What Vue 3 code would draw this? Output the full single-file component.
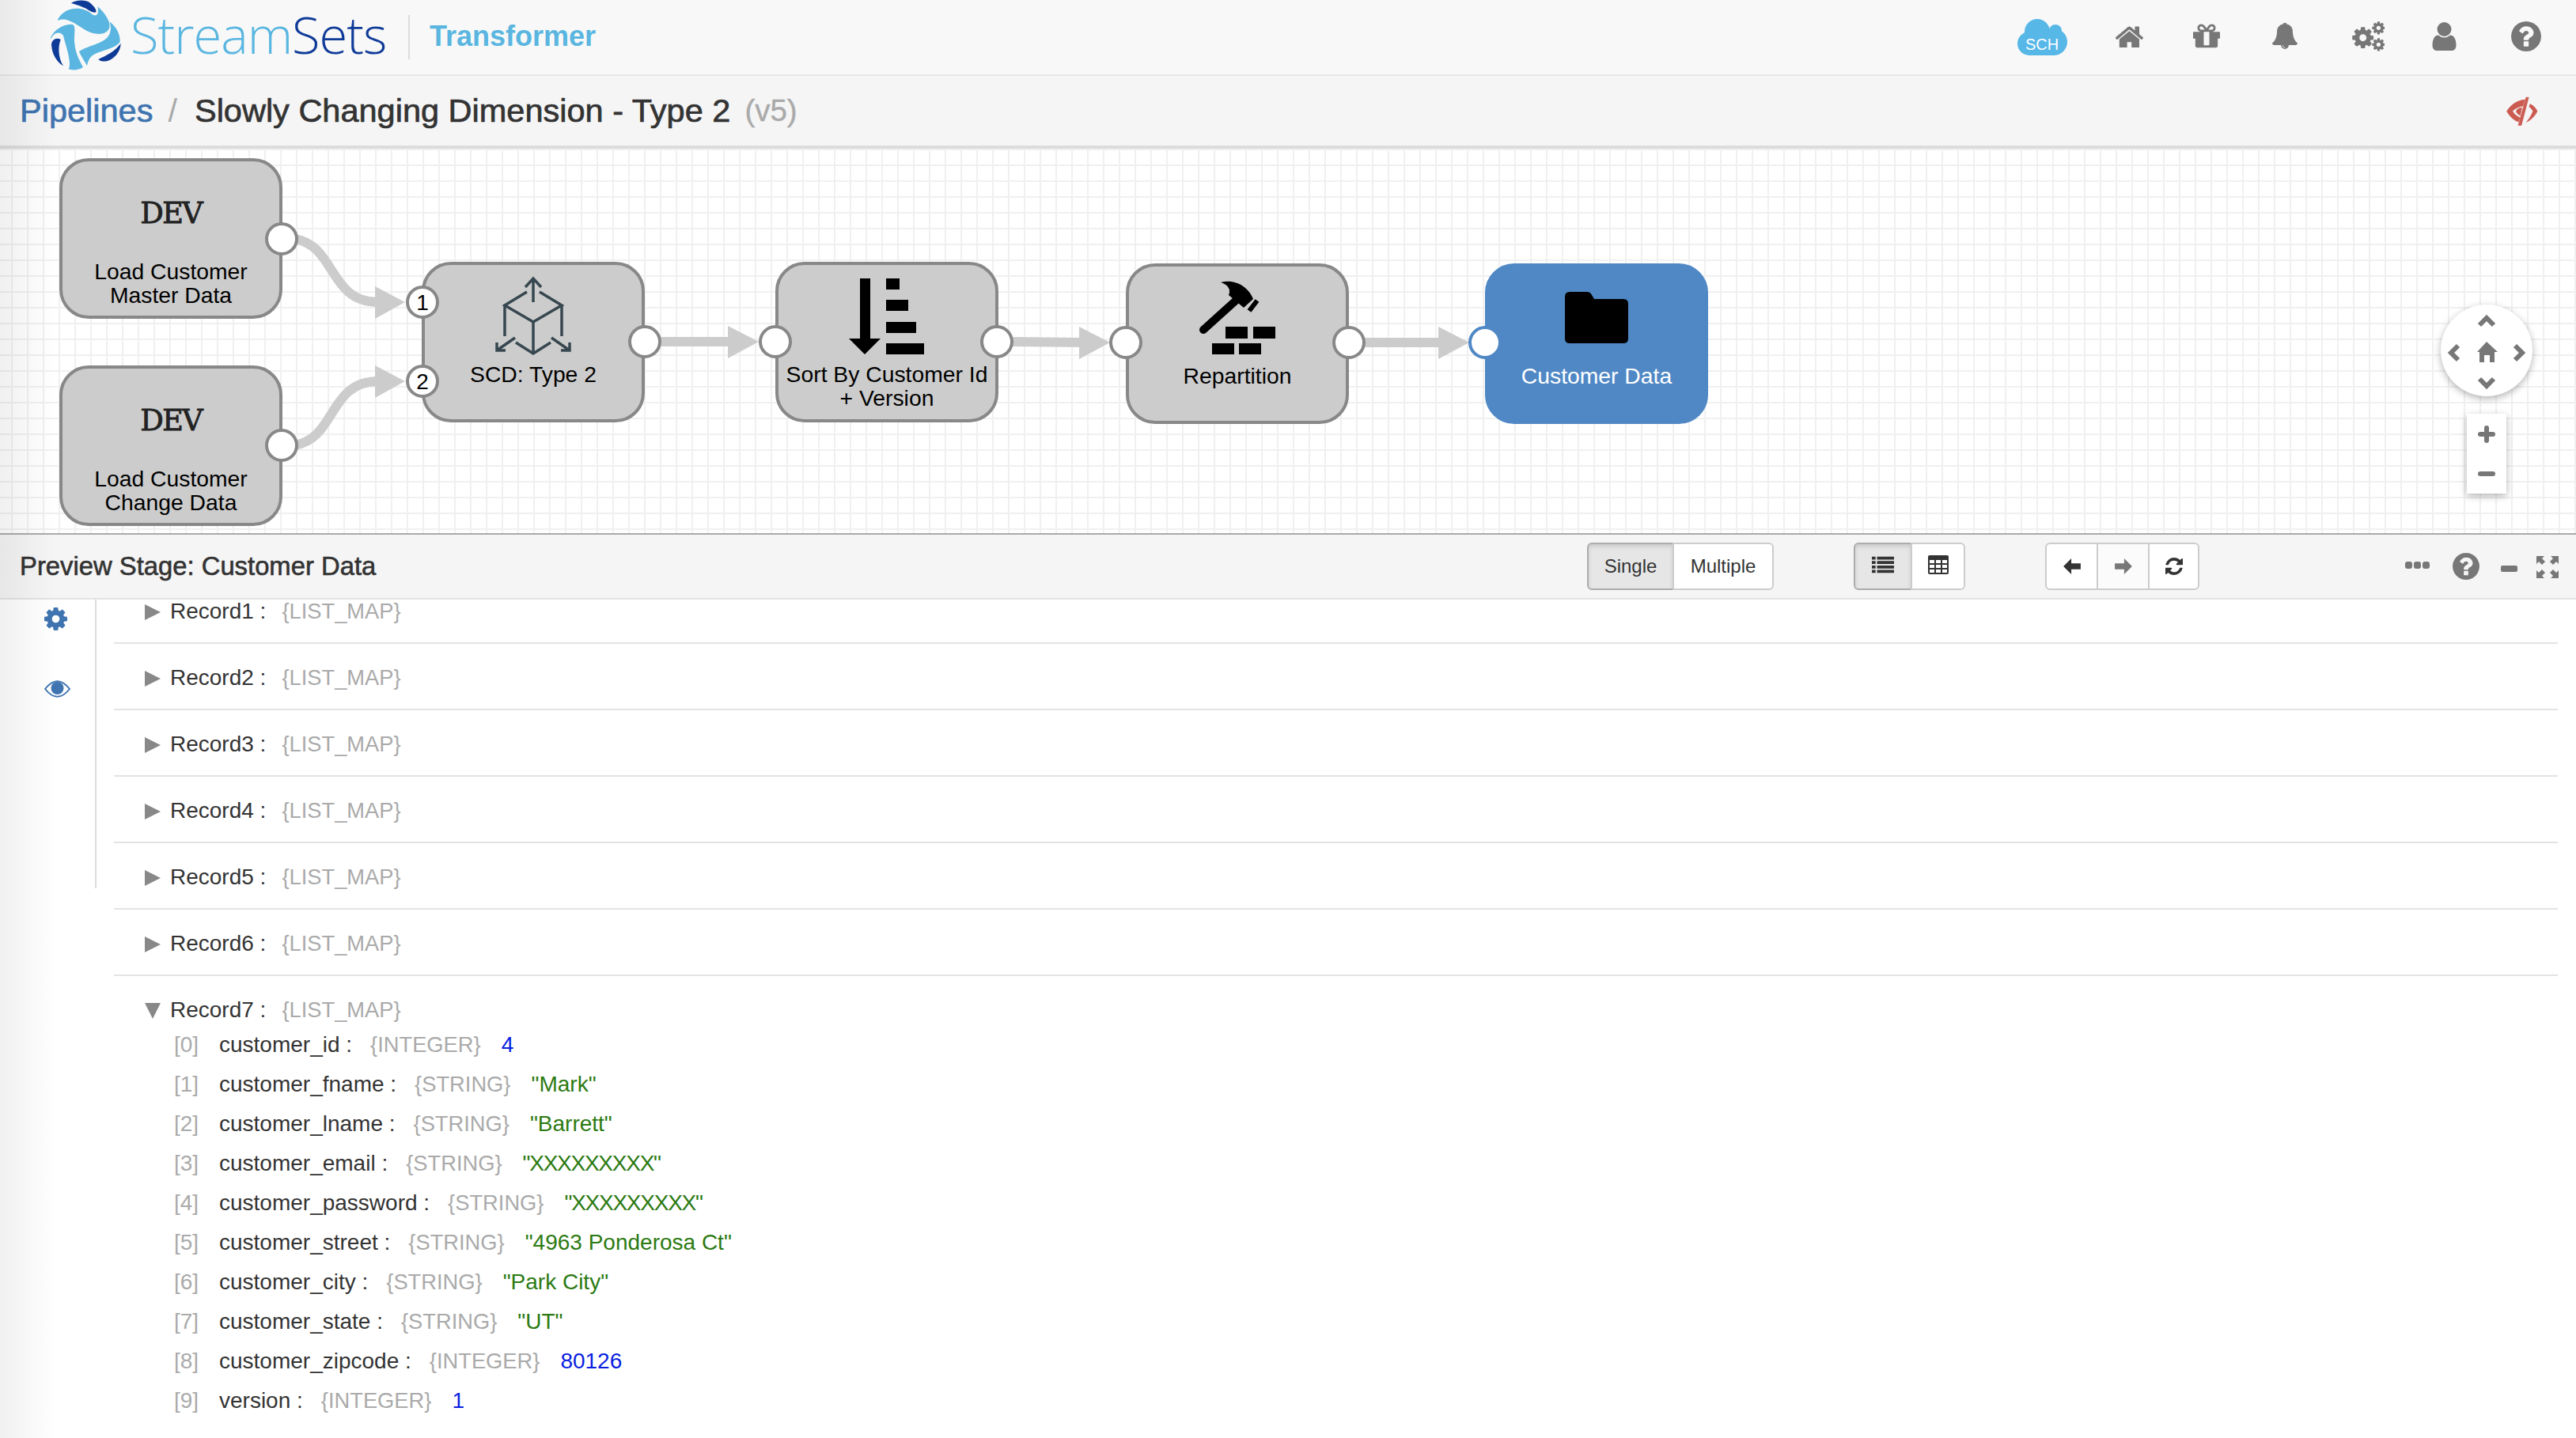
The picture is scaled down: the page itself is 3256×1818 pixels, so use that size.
<template>
  <div class="app">
    <header class="topbar">
      <svg class="swirl" viewBox="0 0 330 282">
        <path fill="#0f3b98" d="M105 12 C120 0 160 -3 178 12 C192 24 200 35 200 46 C185 52 170 35 150 28 C135 20 118 16 105 12Z" />
        <path fill="#5ab6e0" d="M55 72 C80 25 150 20 185 55 C200 65 212 55 205 25 C235 50 255 85 250 105 C240 135 195 135 160 115 C125 95 90 62 55 78Z" />
        <path fill="#5ab6e0" d="M28 140 C40 115 70 92 108 92 C126 96 114 130 118 165 C122 205 135 225 150 255 C135 266 110 268 95 262 C110 240 80 160 75 135 C60 115 35 125 28 150Z" />
        <path fill="#5ab6e0" d="M135 195 C175 170 235 165 250 130 C258 110 255 95 250 82 C275 100 292 130 290 160 C270 185 225 190 195 205 C180 212 170 225 165 250 C155 230 140 210 135 195Z" />
        <path fill="#0f3b98" d="M30 170 C30 150 50 140 65 150 C55 175 55 220 75 250 C50 235 32 205 30 170Z" />
        <path fill="#0f3b98" d="M208 225 C240 210 270 195 293 165 C292 200 265 225 240 232 C225 234 215 232 208 225Z" />
      </svg>
      <div class="brand"><span class="brand-light">Stream</span><span class="brand-dark">Sets</span></div>
      <div class="brand-divider"></div>
      <div class="product">Transformer</div>

      <div class="top-icons">
        <svg class="cloud" viewBox="0 0 63 46">
          <circle cx="25" cy="16" r="16" />
          <circle cx="48" cy="15" r="8" />
          <circle cx="46" cy="29" r="17" />
          <circle cx="15" cy="31" r="15" />
          <rect x="15" y="20" width="31" height="26" />
          <text x="31" y="39" text-anchor="middle">SCH</text>
        </svg>
        <svg class="ico home" viewBox="100 150 1600 1300"><path :d="paths.home" /></svg>
        <svg class="ico gift" viewBox="128 128 1536 1536"><path :d="paths.gift" /></svg>
        <svg class="ico bell" viewBox="64 128 1664 1664"><path :d="paths.bell" /></svg>
        <svg class="ico cogs" viewBox="0 0 42 38">
          <path :d="paths.cog" transform="translate(-1 5) scale(0.0175)" />
          <path :d="paths.cog" transform="translate(25 -1) scale(0.0105)" />
          <path :d="paths.cog" transform="translate(25 20) scale(0.0105)" />
        </svg>
        <svg class="ico user" viewBox="256 128 1280 1536"><path :d="paths.user" /></svg>
        <svg class="ico help" viewBox="128 128 1536 1536"><path :d="paths.help" /></svg>
      </div>
    </header>

    <div class="crumbs">
      <a class="crumb-link">Pipelines</a>
      <span class="crumb-sep">/</span>
      <span class="crumb-title">Slowly Changing Dimension - Type 2</span>
      <span class="crumb-version">(v5)</span>
      <svg class="eye-off" viewBox="40 25 150 130">
        <path d="M133 32 H144 L113 150 H100Z" />
        <path d="M128 42 C95 45 70 62 52 90 C65 115 85 130 100 135 L108 118 C95 112 82 103 76 90 C84 80 100 72 120 68Z" />
        <path d="M92 88 C98 78 108 76 115 76 L108 108 C100 104 90 96 92 88Z" />
        <path d="M150 60 C165 66 175 80 180 90 C172 110 152 128 135 136 C150 118 158 102 162 90 C158 82 152 76 146 72Z" />
      </svg>
    </div>

    <div class="graph">
      <svg class="canvas" viewBox="0 188 3256 486">
        <g class="edges">
          <path v-for="(e, i) in edges" :key="i" :d="e" />
        </g>
        <polygon v-for="(a, i) in arrows" :key="i" class="arrow" :points="a" />

        <g v-for="n in nodes" :key="n.label[0]">
          <rect
            :class="n.active ? 'node node-active' : 'node'"
            :x="n.x + 2" :y="n.y + 2" width="278" height="199" rx="35"
          />
          <text
            v-for="(line, i) in n.label" :key="line"
            :class="n.active ? 'node-label node-label-active' : 'node-label'"
            :x="n.x + 141" :y="n.labelY + i * 30"
          >{{ line }}</text>
          <text v-if="n.dev" class="dev" :x="n.x + 141" :y="n.y + 82">DEV</text>
        </g>

        <!-- stage icons -->
        <g class="scd">
          <path d="M674 382V354M664 363l10-11 10 11" />
          <path d="M666 369L638 386L674 407L710 386L682 369" />
          <path d="M638 386V425M710 386V425M674 407V447" />
          <path d="M652 433L674 447L696 433" />
          <path d="M651 427L628 443M628 433V443H639M697 427L720 443M720 433V443H709" />
        </g>
        <g class="black">
          <rect x="1087" y="352" width="13" height="78" />
          <polygon points="1073,428 1113,428 1093,448" />
          <rect x="1120" y="352" width="17" height="14" />
          <rect x="1120" y="379" width="28" height="14" />
          <rect x="1120" y="407" width="38" height="14" />
          <rect x="1120" y="434" width="48" height="14" />
        </g>
        <g class="black">
          <line x1="1521" y1="417" x2="1562" y2="380" class="handle" />
          <path d="M1543 357 C1560 352 1578 362 1584 378 L1572 389 L1553 373 C1557 365 1550 359 1543 357Z" />
          <line x1="1589" y1="380" x2="1579" y2="393" class="face" />
          <rect x="1549" y="413" width="28" height="15" />
          <rect x="1584" y="413" width="28" height="15" />
          <rect x="1532" y="434" width="28" height="14" />
          <rect x="1566" y="434" width="28" height="14" />
        </g>
        <path class="black" d="M1984 369H2006Q2010 369 2012 373L2015 378H2052Q2058 378 2058 384V428Q2058 434 2052 434H1984Q1978 434 1978 428V375Q1978 369 1984 369Z" />

        <g v-for="(p, i) in ports" :key="i">
          <circle :class="p.active ? 'port port-active' : 'port'" :cx="p.x" :cy="p.y" r="19" />
          <text v-if="p.num" class="port-num" :x="p.x" :y="p.y + 10">{{ p.num }}</text>
        </g>

        <!-- pan and zoom -->
        <circle class="pan" cx="3143" cy="443" r="58" />
        <g class="pan-arrows">
          <path d="M3134 411L3143 402L3152 411" />
          <path d="M3134 479L3143 488L3152 479" />
          <path d="M3107 437L3098 446L3107 455" />
          <path d="M3179 437L3188 446L3179 455" />
        </g>
        <path class="pan-home" fill-rule="evenodd" d="M3143 432L3157 445H3153V458H3147V449H3140V458H3134V445H3131Z" />
        <rect class="pan" x="3118" y="523" width="50" height="101" />
        <path class="zoom-sign" d="M3135 549H3151M3143 541V557M3135 599H3151" />
      </svg>
    </div>

    <div class="preview-bar">
      <div class="preview-title">Preview Stage: Customer Data</div>
      <div class="btn-group">
        <button class="btn btn-single active">Single</button>
        <button class="btn btn-multiple">Multiple</button>
      </div>
      <div class="btn-group group-gap">
        <button class="btn btn-list active">
          <svg class="btn-ico" viewBox="0 0 30 24">
            <path d="M0 1h5v4H0zM7 1h23v4H7zM0 7h5v4H0zM7 7h23v4H7zM0 13h5v4H0zM7 13h23v4H7zM0 19h5v4H0zM7 19h23v4H7z" />
          </svg>
        </button>
        <button class="btn btn-table">
          <svg class="btn-ico" viewBox="0 0 26 24">
            <path fill-rule="evenodd" d="M2 0H24Q26 0 26 2V22Q26 24 24 24H2Q0 24 0 22V2Q0 0 2 0ZM2 6V10H8V6ZM10 6V10H16V6ZM18 6V10H24V6ZM2 12V16H8V12ZM10 12V16H16V12ZM18 12V16H24V12ZM2 18V22H8V18ZM10 18V22H16V18ZM18 18V22H24V18Z" />
          </svg>
        </button>
      </div>
      <div class="btn-group group-gap">
        <button class="btn btn-nav">
          <svg class="btn-arrow" viewBox="0 0 24 22"><path d="M0 11L11 0V7H24V15H11V22Z" /></svg>
        </button>
        <button class="btn btn-nav faded">
          <svg class="btn-arrow" viewBox="0 0 24 22"><path d="M24 11L13 0V7H0V15H13V22Z" /></svg>
        </button>
        <button class="btn btn-nav btn-refresh">
          <svg class="btn-refresh-ico" viewBox="128 128 1536 1536"><path :d="paths.refresh" /></svg>
        </button>
      </div>
      <div class="bar-tools">
        <svg class="tool-dots" viewBox="0 0 31 9">
          <rect x="0" y="0" width="9" height="9" rx="3" />
          <rect x="11" y="0" width="9" height="9" rx="3" />
          <rect x="22" y="0" width="9" height="9" rx="3" />
        </svg>
        <svg class="tool-help" viewBox="128 128 1536 1536"><path :d="paths.help" /></svg>
        <svg class="tool-minus" viewBox="0 0 21 8"><rect width="21" height="8" rx="2" /></svg>
        <svg class="tool-expand" viewBox="0 0 28 28">
          <path d="M0 0H10L7 3L11 7L7 11L3 7L0 10ZM28 0V10L25 7L21 11L17 7L21 3L18 0ZM0 28V18L3 21L7 17L11 21L7 25L10 28ZM28 28H18L21 25L17 21L21 17L25 21L28 18Z" />
        </svg>
      </div>
    </div>

    <div class="preview-body">
      <aside class="side">
        <svg class="side-gear" viewBox="128 128 1536 1536"><path :d="paths.cog" /></svg>
        <svg class="side-eye" viewBox="0 0 33 22">
          <path class="eye-line" d="M1 11C7 3.500 12 1.200 16.500 1.200S26 3.500 32 11C26 18.500 21 20.800 16.500 20.800S7 18.500 1 11Z" />
          <circle class="eye-ball" cx="16.500" cy="10" r="8" />
        </svg>
      </aside>
      <div class="records">
        <div v-for="r in records" :key="r" class="record">
          <div class="rec-line">
            <span class="tri-right"></span>
            <span class="key">{{ r }} :</span>
            <span class="type">{LIST_MAP}</span>
          </div>
        </div>
        <div class="record-open">
          <div class="rec-line rec-line-open">
            <span class="tri-down"></span>
            <span class="key">Record7 :</span>
            <span class="type">{LIST_MAP}</span>
          </div>
          <div v-for="(f, i) in fields" :key="f.name" class="field">
            <span class="idx">[{{ i }}]</span>
            <span class="key">{{ f.name }} :</span>
            <span class="type">{{ f.type }}</span>
            <span :class="valueClass(f)">{{ f.value }}</span>
          </div>
        </div>
      </div>
    </div>

    <div class="edge-shade"></div>
  </div>
</template>

<script setup>
const paths = {
  home: 'M1472 992v480q0 26-19 45t-45 19h-384v-384h-256v384h-384q-26 0-45-19t-19-45v-480q0-1 .5-3t.5-3l575-474 575 474q1 2 1 6zm223-69l-62 74q-8 9-21 11h-3q-13 0-21-7l-692-577-692 577q-12 8-24 7-13-2-21-11l-62-74q-8-10-7-23.5t11-21.5l719-599q32-26 76-26t76 26l244 204v-195q0-14 9-23t23-9h192q14 0 23 9t9 23v408l219 182q10 8 11 21.5t-7 23.5z',
  gift: 'M1056 1356v-716h-320v716q0 25 18 38.500t46 13.500h192q28 0 46-13.500t18-38.500zm-456-844h195l-126-161q-26-31-69-31-40 0-68 28t-28 68 28 68 68 28zm688-96q0-40-28-68t-68-28q-43 0-69 31l-125 161h194q40 0 68-28t28-68zm376 256v320q0 14-9 23t-23 9h-96v416q0 40-28 68t-68 28h-1088q-40 0-68-28t-28-68v-416h-96q-14 0-23-9t-9-23v-320q0-14 9-23t23-9h440q-93 0-158.500-65.500t-65.500-158.500 65.500-158.500 158.500-65.500q107 0 168 77l128 165 128-165q61-77 168-77 93 0 158.500 65.500t65.500 158.500-65.500 158.500-158.500 65.500h440q14 0 23 9t9 23z',
  bell: 'M912 1696q0-16-16-16-59 0-101.500-42.500t-42.500-101.500q0-16-16-16t-16 16q0 73 51.500 124.500t124.500 51.500q16 0 16-16zm816-288q0 52-38 90t-90 38h-448q0 106-75 181t-181 75-181-75-75-181h-448q-52 0-90-38t-38-90q50-42 91-88t85-119.500 74.500-158.500 50-206 19.500-260q0-152 117-282.500t307-158.500q-8-19-8-39 0-40 28-68t68-28 68 28 28 68q0 20-8 39 190 28 307 158.500t117 282.500q0 139 19.500 260t50 206 74.500 158.500 85 119.500 91 88z',
  cog: 'M1152 896q0-106-75-181t-181-75-181 75-75 181 75 181 181 75 181-75 75-181zm512-109v222q0 12-8 23t-20 13l-185 28q-19 54-39 91 35 50 107 138 10 12 10 25t-9 23q-27 37-99 108t-94 71q-12 0-26-9l-138-108q-44 23-91 38-16 136-29 186-7 28-36 28h-222q-14 0-24.500-8.500t-11.500-21.500l-28-184q-49-16-90-37l-141 107q-10 9-25 9-14 0-25-11-126-114-165-168-7-10-7-23 0-12 8-23 15-21 51-66.500t54-70.500q-27-50-41-99l-183-27q-13-2-21-12.500t-8-23.500v-222q0-12 8-23t19-13l186-28q14-46 39-92-40-57-107-138-10-12-10-24 0-10 9-23 26-36 98.500-107.500t94.500-71.500q13 0 26 10l138 107q44-23 91-38 16-136 29-186 7-28 36-28h222q14 0 24.500 8.500t11.500 21.500l28 184q49 16 90 37l142-107q9-9 24-9 13 0 25 10 129 119 165 170 7 8 7 22 0 12-8 23-15 21-51 66.500t-54 70.500q26 50 41 98l183 28q13 2 21 12.500t8 23.500z',
  user: 'M1536 1399q0 109-62.500 187t-150.500 78h-854q-88 0-150.500-78t-62.500-187q0-85 8.500-160.500t31.500-152 58.500-131 94-89 134.500-34.500q131 128 313 128t313-128q76 0 134.500 34.500t94 89 58.500 131 31.500 152 8.500 160.500zm-256-887q0 159-112.500 271.500t-271.500 112.500-271.500-112.500-112.500-271.500 112.500-271.500 271.500-112.500 271.500 112.500 112.500 271.500z',
  help: 'M1024 1376v-192q0-14-9-23t-23-9h-192q-14 0-23 9t-9 23v192q0 14 9 23t23 9h192q14 0 23-9t9-23zm256-672q0-88-55.500-163t-138.500-116-170-41q-243 0-371 213-15 24 8 42l132 100q7 6 19 6 16 0 25-12 53-68 86-92 34-24 86-24 48 0 85.500 26t37.500 59q0 38-20 61t-68 45q-63 28-115.500 86.500t-52.500 125.500v36q0 14 9 23t23 9h192q14 0 23-9t9-23q0-19 21.500-49.500t54.500-49.500q32-18 49-28.500t46-35 44.500-48 28-60.500 12.500-81zm384 192q0 209-103 385.500t-279.500 279.500-385.500 103-385.500-103-279.500-279.500-103-385.500 103-385.500 279.500-279.500 385.500-103 385.500 103 279.500 279.500 103 385.500z',
  refresh: 'M1639 1056q0 5-1 7-64 268-268 434.500t-478 166.500q-146 0-282.500-55t-243.500-157l-129 129q-19 19-45 19t-45-19-19-45v-448q0-26 19-45t45-19h448q26 0 45 19t19 45-19 45l-137 137q71 66 161 102t187 36q134 0 250-65t186-179q11-17 53-117 8-23 30-23h192q13 0 22.500 9.500t9.500 22.500zm25-800v448q0 26-19 45t-45 19h-448q-26 0-45-19t-19-45 19-45l138-138q-148-137-349-137-134 0-250 65t-186 179q-11 17-53 117-8 23-30 23h-199q-13 0-22.500-9.500t-9.500-22.500v-7q65-268 270-434.500t480-166.500q146 0 284 55.500t245 156.500l130-129q19-19 45-19t45 19 19 45z',
}

const nodes = [
  { x: 75, y: 200, label: ['Load Customer', 'Master Data'], labelY: 353, dev: true },
  { x: 75, y: 462, label: ['Load Customer', 'Change Data'], labelY: 615, dev: true },
  { x: 533, y: 331, label: ['SCD: Type 2'], labelY: 483 },
  { x: 980, y: 331, label: ['Sort By Customer Id', '+ Version'], labelY: 483 },
  { x: 1423, y: 333, label: ['Repartition'], labelY: 485 },
  { x: 1877, y: 333, label: ['Customer Data'], labelY: 485, active: true },
]

const ports = [
  { x: 356, y: 302 },
  { x: 356, y: 563 },
  { x: 534, y: 382, num: 1 },
  { x: 534, y: 482, num: 2 },
  { x: 815, y: 432 },
  { x: 980, y: 432 },
  { x: 1260, y: 432 },
  { x: 1423, y: 433 },
  { x: 1705, y: 433 },
  { x: 1877, y: 433, active: true },
]

const edges = [
  'M372 302C425 310 415 382 478 382',
  'M372 563C425 555 415 482 478 482',
  'M832 432H925',
  'M1278 432L1370 433',
  'M1722 433H1825',
]

const arrows = [
  '474,362 512,382 474,403',
  '474,462 512,482 474,503',
  '920,412 959,432 920,453',
  '1364,413 1403,433 1364,454',
  '1818,413 1857,433 1818,454',
]

const records = ['Record1', 'Record2', 'Record3', 'Record4', 'Record5', 'Record6']

const fields = [
  { name: 'customer_id', type: '{INTEGER}', value: '4' },
  { name: 'customer_fname', type: '{STRING}', value: '"Mark"' },
  { name: 'customer_lname', type: '{STRING}', value: '"Barrett"' },
  { name: 'customer_email', type: '{STRING}', value: '"XXXXXXXXX"', masked: true },
  { name: 'customer_password', type: '{STRING}', value: '"XXXXXXXXX"', masked: true },
  { name: 'customer_street', type: '{STRING}', value: '"4963 Ponderosa Ct"' },
  { name: 'customer_city', type: '{STRING}', value: '"Park City"' },
  { name: 'customer_state', type: '{STRING}', value: '"UT"' },
  { name: 'customer_zipcode', type: '{INTEGER}', value: '80126' },
  { name: 'version', type: '{INTEGER}', value: '1' },
]

function valueClass(f) {
  if (f.type === '{INTEGER}') return 'val val-num'
  return f.masked ? 'val val-str val-masked' : 'val val-str'
}
</script>

<style>
body {
  margin: 0;
  background: #fff;
}
</style>

<style scoped>
.app {
  position: relative;
  width: 3256px;
  height: 1818px;
  overflow: hidden;
  background: #fff;
  color: #333;
  font-family: "Liberation Sans", Arial, sans-serif;
}

.edge-shade {
  position: absolute;
  left: 0;
  top: 0;
  width: 70px;
  height: 100%;
  background: linear-gradient(to right, rgba(0, 0, 0, 0.06), rgba(0, 0, 0, 0));
  pointer-events: none;
}

/* top bar */
.topbar {
  display: flex;
  align-items: center;
  box-sizing: border-box;
  height: 96px;
  padding-left: 55px;
  padding-right: 44px;
  background: #f8f8f8;
  border-bottom: 2px solid #e7e7e7;
}

.swirl {
  width: 110px;
  height: 94px;
  flex: none;
}

.brand {
  width: 351px;
  margin-top: -8px;
  font-family: "Open Sans", sans-serif;
  font-weight: 300;
  font-size: 65px;
  letter-spacing: -1px;
  white-space: nowrap;
}

.brand-light {
  color: #5ab6e0;
}

.brand-dark {
  color: #0f3b98;
}

.brand-divider {
  width: 2px;
  height: 56px;
  background: #ddd;
}

.product {
  margin-left: 25px;
  margin-top: -2px;
  font-size: 36px;
  font-weight: 700;
  color: #5ab6e0;
}

.top-icons {
  display: flex;
  align-items: center;
  margin-left: auto;
  margin-top: -3px;
}

.cloud {
  width: 63px;
  height: 46px;
  margin-top: 2px;
  fill: #57b7e7;
}

.cloud text {
  fill: #fff;
  font-size: 20px;
}

.ico {
  fill: #777;
  flex: none;
}

.home {
  width: 35px;
  height: 29px;
  margin-left: 61px;
}

.gift {
  width: 34px;
  height: 34px;
  margin-left: 63px;
}

.bell {
  width: 32px;
  height: 34px;
  margin-left: 66px;
}

.cogs {
  width: 42px;
  height: 38px;
  margin-left: 68px;
}

.user {
  width: 31px;
  height: 36px;
  margin-left: 60px;
}

.help {
  width: 38px;
  height: 38px;
  margin-left: 69px;
}

/* breadcrumb */
.crumbs {
  display: flex;
  align-items: center;
  box-sizing: border-box;
  height: 92px;
  padding: 0 46px 0 25px;
  font-size: 41.500px;
  background: #f5f5f5;
  border-bottom: 4px solid #dcdcdc;
}

.crumb-link {
  color: #3f74b0;
  -webkit-text-stroke: 0.7px #3f74b0;
}

.crumb-sep {
  margin: 0 22px 0 19px;
  color: #aaa;
}

.crumb-title {
  color: #333;
  -webkit-text-stroke: 0.7px #333;
}

.crumb-version {
  margin-left: 18px;
  color: #aaa;
  font-size: 38.500px;
  -webkit-text-stroke: 0.4px #aaa;
}

.eye-off {
  width: 45px;
  height: 39px;
  margin-left: auto;
  fill: #cb5a50;
  stroke: #cb5a50;
  stroke-width: 2;
}

/* pipeline canvas */
.graph {
  box-sizing: border-box;
  height: 488px;
  border-bottom: 2px solid #aaa;
  background-color: #fff;
  background-image:
    linear-gradient(to right, #f0f0f0 2px, transparent 2px),
    linear-gradient(to bottom, #f0f0f0 2px, transparent 2px);
  background-size: 20px 20px;
  background-position: 14px 0;
}

.canvas {
  display: block;
  width: 3256px;
  height: 486px;
}

.edges path {
  fill: none;
  stroke: #ccc;
  stroke-width: 12;
}

.arrow {
  fill: #ccc;
}

.node {
  fill: #ccc;
  stroke: #888;
  stroke-width: 4;
}

.node-active {
  fill: #5088c5;
  stroke: #5088c5;
}

.node-label {
  font-size: 28.300px;
  text-anchor: middle;
  fill: #000;
}

.node-label-active {
  fill: #fff;
}

.dev {
  font-family: "DejaVu Serif", serif;
  font-size: 37px;
  letter-spacing: -2px;
  text-anchor: middle;
  fill: #222;
  stroke: #222;
  stroke-width: 0.8;
}

.port {
  fill: #fff;
  stroke: #888;
  stroke-width: 4;
}

.port-active {
  stroke: #5088c5;
}

.port-num {
  font-size: 28px;
  text-anchor: middle;
  fill: #000;
}

.scd path {
  fill: none;
  stroke: #37474f;
  stroke-width: 3.500;
}

.black {
  fill: #000;
}

.handle {
  stroke: #000;
  stroke-width: 10;
  stroke-linecap: round;
}

.face {
  stroke: #000;
  stroke-width: 6;
}

.pan {
  fill: #fff;
  filter: drop-shadow(0 3px 5px rgba(0, 0, 0, 0.3));
}

.pan-arrows path {
  fill: none;
  stroke: #777;
  stroke-width: 6;
}

.pan-home {
  fill: #777;
}

.zoom-sign {
  fill: none;
  stroke: #777;
  stroke-width: 6;
  stroke-linecap: round;
}

/* preview toolbar */
.preview-bar {
  display: flex;
  align-items: center;
  box-sizing: border-box;
  height: 82px;
  padding: 0 22px 0 25px;
  background: #f5f5f5;
  border-bottom: 2px solid #e3e3e3;
}

.preview-title {
  flex: 1;
  font-size: 32.800px;
  color: #333;
  -webkit-text-stroke: 0.6px #333;
}

.btn-group {
  display: flex;
  height: 60px;
}

.group-gap {
  margin-left: 101px;
}

.btn {
  display: flex;
  align-items: center;
  justify-content: center;
  box-sizing: border-box;
  height: 60px;
  padding: 0;
  font: 24px "Liberation Sans", Arial, sans-serif;
  color: #333;
  background: #fff;
  border: 2px solid #ccc;
  margin-left: -2px;
}

.btn:first-child {
  margin-left: 0;
  border-radius: 6px 0 0 6px;
}

.btn:last-child {
  border-radius: 0 6px 6px 0;
}

.btn.active {
  background: #e6e6e6;
  border-color: #adadad;
  box-shadow: inset 0 3px 5px rgba(0, 0, 0, 0.125);
}

.btn-single {
  width: 110px;
}

.btn-multiple {
  width: 128px;
}

.btn-list {
  width: 74px;
}

.btn-table {
  width: 69px;
}

.btn-nav {
  width: 67px;
}

.btn-refresh {
  width: 65px;
}

.faded {
  background: #fbfbfb;
}

.faded svg {
  fill: #777;
}

.btn-ico {
  width: 28px;
  height: 24px;
  margin-bottom: 4px;
  fill: #333;
}

.btn-table .btn-ico {
  width: 26px;
}

.btn-arrow {
  width: 24px;
  height: 20px;
  fill: #333;
}

.btn-refresh-ico {
  width: 22px;
  height: 26px;
  fill: #333;
}

.bar-tools {
  display: flex;
  align-items: center;
  margin-left: 260px;
  fill: #777;
}

.tool-dots {
  width: 31px;
  height: 9px;
  margin-top: -4px;
}

.tool-help {
  width: 34px;
  height: 34px;
  margin-left: 29px;
}

.tool-minus {
  width: 21px;
  height: 8px;
  margin-left: 27px;
  margin-top: 6px;
}

.tool-expand {
  width: 28px;
  height: 28px;
  margin-left: 24px;
  margin-top: 2px;
}

/* records */
.preview-body {
  display: flex;
  align-items: flex-start;
  height: 1060px;
  overflow: hidden;
}

.side {
  display: flex;
  flex-direction: column;
  flex: none;
  box-sizing: border-box;
  width: 122px;
  height: 365px;
  padding: 10px 0 0 56px;
  border-right: 2px solid #ddd;
}

.side-gear {
  width: 29px;
  height: 29px;
  fill: #3f74b0;
}

.side-eye {
  width: 33px;
  height: 22px;
  margin-top: 63px;
}

.eye-line {
  fill: #fff;
  stroke: #3f74b0;
  stroke-width: 2;
}

.eye-ball {
  fill: #3f74b0;
}

.records {
  flex: 1;
  margin: -28px 23px 0 22px;
  font-size: 28px;
}

.record {
  box-sizing: border-box;
  height: 84px;
  padding-top: 26px;
  border-bottom: 2px solid #e3e3e3;
}

.record-open {
  padding-top: 26px;
}

.rec-line {
  display: flex;
  align-items: center;
  height: 34px;
  padding-left: 39px;
  white-space: pre;
}

.rec-line-open {
  margin-bottom: 2px;
}

.rec-line .type {
  margin-left: 20px;
}

.tri-right {
  width: 0;
  height: 0;
  margin-right: 12px;
  margin-top: 2px;
  border-left: 20px solid #888;
  border-top: 10px solid transparent;
  border-bottom: 10px solid transparent;
}

.tri-down {
  width: 0;
  height: 0;
  margin-right: 12px;
  margin-top: 2px;
  border-top: 20px solid #888;
  border-left: 10px solid transparent;
  border-right: 10px solid transparent;
}

.key {
  color: #333;
}

.type {
  margin-left: 23px;
  font-size: 27.300px;
  color: #aaa;
}

.field {
  display: flex;
  align-items: center;
  height: 50px;
  padding-left: 76px;
  white-space: pre;
}

.idx {
  width: 57px;
  color: #aaa;
}

.val {
  margin-left: 26px;
}

.val-str {
  color: #2c7a12;
}

.val-masked {
  letter-spacing: -1.250px;
}

.val-num {
  color: #0a1fe0;
}
</style>
